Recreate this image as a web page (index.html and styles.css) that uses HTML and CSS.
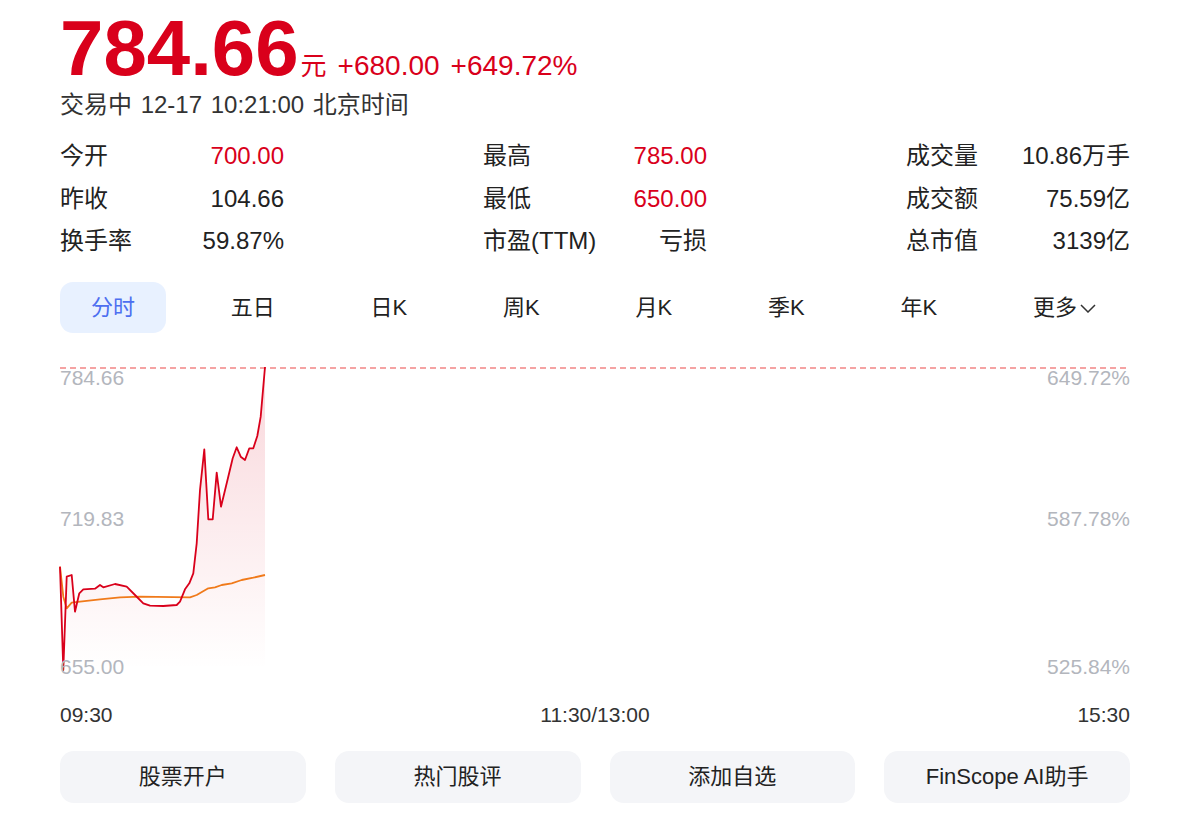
FILE: index.html
```html
<!DOCTYPE html>
<html lang="zh-CN">
<head>
<meta charset="utf-8">
<title>784.66</title>
<link rel="stylesheet" href="styles.css">
</head>
<body>
<div class="page">
  <div class="quote">
    <span class="price">784.66</span><span class="unit">元</span><span class="chg">+680.00</span><span class="chg">+649.72%</span>
  </div>
  <div class="status">交易中 12-17 10:21:00 北京时间</div>

  <div class="stats">
    <div class="stat"><span class="k">今开</span><span class="v up">700.00</span></div>
    <div class="stat"><span class="k">最高</span><span class="v up">785.00</span></div>
    <div class="stat"><span class="k">成交量</span><span class="v">10.86万手</span></div>
    <div class="stat"><span class="k">昨收</span><span class="v">104.66</span></div>
    <div class="stat"><span class="k">最低</span><span class="v up">650.00</span></div>
    <div class="stat"><span class="k">成交额</span><span class="v">75.59亿</span></div>
    <div class="stat"><span class="k">换手率</span><span class="v">59.87%</span></div>
    <div class="stat"><span class="k">市盈(TTM)</span><span class="v">亏损</span></div>
    <div class="stat"><span class="k">总市值</span><span class="v">3139亿</span></div>
  </div>

  <div class="tabs">
    <div class="tab active">分时</div>
    <div class="tab">五日</div>
    <div class="tab">日K</div>
    <div class="tab">周K</div>
    <div class="tab">月K</div>
    <div class="tab">季K</div>
    <div class="tab">年K</div>
    <div class="tab more">更多<svg class="chev" width="16" height="9" viewBox="0 0 16 9"><path d="M1 1 L8 8 L15 1" fill="none" stroke="#333" stroke-width="1.5" stroke-linejoin="miter"/></svg></div>
  </div>

  <div class="chart">
    <svg class="plot" width="1070" height="310" viewBox="0 0 1070 310">
      <defs>
        <linearGradient id="fillg" x1="0" y1="0" x2="0" y2="303" gradientUnits="userSpaceOnUse">
          <stop offset="0" stop-color="#d9001b" stop-opacity="0.16"/>
          <stop offset="1" stop-color="#d9001b" stop-opacity="0"/>
        </linearGradient>
      </defs>
      <line x1="0" y1="1" x2="1070" y2="1" stroke="#f5a3a3" stroke-width="2" stroke-dasharray="6 4"/>
      <path fill="url(#fillg)" d="M0 199.7 L3.3 303 L6.7 209.7 L11.7 208 L15 244.7 L19.3 226.3 L23.3 222.3 L35 221.7 L40 218 L43.3 220.3 L55 217 L66.7 219.7 L75 228 L83.3 236.3 L90 238.7 L103.3 239 L116.7 238 L120 234.7 L125 222.3 L129.3 216.3 L133.3 206.3 L136.7 176.3 L140 123 L144.3 82.3 L148.3 152.3 L152.7 152.3 L156.7 105.7 L161 139.7 L166.7 116.3 L172.7 91.3 L176.7 80.3 L180.7 89.7 L185 93 L189.3 81.3 L193.3 81.3 L197.3 69 L200.7 49.7 L205 0 L205 303 L0 303 Z"/>
      <path fill="none" stroke="#f07a1a" stroke-width="1.8" stroke-linejoin="round" d="M0 199.7 L3.3 229.7 L6.7 241.3 L11.7 235.7 L20 234.7 L40 232.3 L60 230.3 L80 229.7 L130 230.3 L136.7 228 L148.3 221.3 L155 220.3 L161.7 218 L171.7 216.3 L181.7 213 L193.3 210.7 L205 208"/>
      <path fill="none" stroke="#d9001b" stroke-width="1.8" stroke-linejoin="round" d="M0 199.7 L3.3 303 L6.7 209.7 L11.7 208 L15 244.7 L19.3 226.3 L23.3 222.3 L35 221.7 L40 218 L43.3 220.3 L55 217 L66.7 219.7 L75 228 L83.3 236.3 L90 238.7 L103.3 239 L116.7 238 L120 234.7 L125 222.3 L129.3 216.3 L133.3 206.3 L136.7 176.3 L140 123 L144.3 82.3 L148.3 152.3 L152.7 152.3 L156.7 105.7 L161 139.7 L166.7 116.3 L172.7 91.3 L176.7 80.3 L180.7 89.7 L185 93 L189.3 81.3 L193.3 81.3 L197.3 69 L200.7 49.7 L205 0"/>
    </svg>
    <div class="scale left">
      <span>784.66</span><span>719.83</span><span>655.00</span>
    </div>
    <div class="scale right">
      <span>649.72%</span><span>587.78%</span><span>525.84%</span>
    </div>
  </div>

  <div class="times">
    <span>09:30</span><span>11:30/13:00</span><span>15:30</span>
  </div>

  <div class="actions">
    <div class="btn">股票开户</div>
    <div class="btn">热门股评</div>
    <div class="btn">添加自选</div>
    <div class="btn">FinScope AI助手</div>
  </div>
</div>
</body>
</html>
```

FILE: styles.css
```css
* { box-sizing: border-box; }

html, body {
  margin: 0;
  padding: 0;
  background: #ffffff;
}

body {
  font-family: "Liberation Sans", Arial, "Noto Sans CJK SC", sans-serif;
  color: #222222;
}

.page {
  width: 1070px;
  margin-left: 60px;
  padding-top: 10px;
}

.quote {
  display: flex;
  align-items: baseline;
  height: 77px;
  line-height: 77px;
  color: #d9001b;
}

.price {
  font-size: 78px;
  font-weight: bold;
}

.unit {
  font-size: 26px;
  margin-left: 2px;
}

.chg {
  font-size: 28px;
  margin-left: 11px;
}

.status {
  margin-top: 2px;
  height: 32px;
  line-height: 32px;
  font-size: 24px;
  color: #333333;
  word-spacing: 2px;
}

.stats {
  margin-top: 14px;
  display: grid;
  grid-template-columns: 224px 224px 224px;
  grid-auto-rows: 42.5px;
  justify-content: space-between;
  font-size: 24px;
}

.stat {
  display: flex;
  justify-content: space-between;
  align-items: center;
  line-height: 42.5px;
}

.k { color: #222222; }
.v { color: #222222; }
.v.up { color: #d9001b; }

.tabs {
  margin-top: 19.5px;
  display: flex;
  justify-content: space-between;
  font-size: 22px;
}

.tab {
  height: 51px;
  line-height: 51px;
  padding: 0 31px;
  border-radius: 13px;
  color: #222222;
  display: flex;
  align-items: center;
}

.tab.active {
  background: #e8f1ff;
  color: #4d6ff0;
}

.tab.more {
  padding-right: 34px;
}

.chev {
  margin-left: 3px;
  margin-top: 2px;
}

.chart {
  margin-top: 34px;
  display: grid;
  grid-template-columns: 1fr;
  height: 310px;
}

.chart > * {
  grid-row: 1;
  grid-column: 1;
}

.plot {
  display: block;
  overflow: visible;
}

.scale {
  display: flex;
  flex-direction: column;
  font-size: 21px;
  line-height: 21px;
  color: #b3b6bd;
}

.scale span:nth-child(2) { margin-top: 120px; }
.scale span:nth-child(3) { margin-top: 127px; }

.scale.left { justify-self: start; }
.scale.right { justify-self: end; align-items: flex-end; }

.times {
  margin-top: 26.5px;
  display: flex;
  justify-content: space-between;
  font-size: 21px;
  line-height: 21px;
  color: #333333;
}

.actions {
  margin-top: 26.5px;
  display: grid;
  grid-template-columns: repeat(4, 1fr);
  column-gap: 29px;
}

.btn {
  height: 52px;
  line-height: 52px;
  border-radius: 14px;
  background: #f4f5f8;
  text-align: center;
  font-size: 22px;
  color: #222222;
}
```
